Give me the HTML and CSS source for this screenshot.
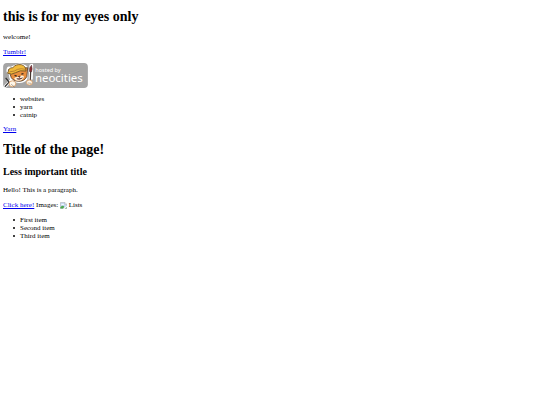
FILE: index.html
```html
<!DOCTYPE html>
<html lang="en">
<head>
<meta charset="utf-8">
<title>this is for my eyes only</title>
<link rel="stylesheet" href="styles.css">
</head>
<body>
<h1>this is for my eyes only</h1>
<p>welcome!</p>
<p><a href="#tumblr">Tumblr!</a></p>
<a class="host" href="#neocities" aria-label="hosted by neocities">
<svg class="badge" viewBox="0 0 200 59">
  <rect width="200" height="59" rx="9" fill="#a5a5a5"/>
  <!-- white outline around the cat -->
  <path d="M9 12 Q10 6 18 9 L27 5 Q38 -2 50 4 Q62 8 59 23 L57 39 Q50 48 36 47 L25 45 Q13 40 14 28 Q5 25 9 12Z" fill="#fff"/>
  <path d="M63 43 L65 6 L68 5 L67 39" fill="none" stroke="#fff" stroke-width="6" stroke-linejoin="round"/>
  <path d="M5 55 L22 38" stroke="#fff" stroke-width="7" stroke-linecap="round"/>
  <!-- head and ears -->
  <path d="M17 28 L13 16 L25 18 L50 12 L58 11 L56 32 Q50 44 36 43 Q20 43 17 28Z" fill="#e98f3e" stroke="#503a29" stroke-width="2"/>
  <path d="M26 36 Q30 32 37 33 Q43 27 49 31 Q48 41 37 42 Q28 42 26 36Z" fill="#fff3df"/>
  <!-- cap -->
  <path d="M12 21 Q12 11 23 11 Q30 2 43 4 Q54 7 54 19 Q40 16 29 23 Q20 29 10 24Z" fill="#f0b93a" stroke="#6b4d22" stroke-width="2"/>
  <path d="M15 21 Q28 20 34 15 Q43 12 52 15" fill="none" stroke="#ad7930" stroke-width="2"/>
  <path d="M27 29 L32 31 M43 26 L48 25" stroke="#342923" stroke-width="3"/>
  <path d="M36 32 L40 31 L39 34Z M32 37 Q38 41 46 35" fill="#7e3939" stroke="#573a32" stroke-width="2"/>
  <!-- pen, brush and paws -->
  <path d="M4 56 L14 45 M6 35 L18 50" stroke="#333" stroke-width="3"/>
  <path d="M64 43 L65 19" stroke="#463832" stroke-width="3"/>
  <path d="M62 20 Q61 11 67 5 Q70 14 67 21Z" fill="#8d3035" stroke="#41282a" stroke-width="1"/>
  <ellipse cx="22" cy="49" rx="8" ry="7" fill="#fff7e9" stroke="#d99b63" stroke-width="2"/>
  <ellipse cx="62" cy="46" rx="7" ry="6" fill="#fff7e9" stroke="#d99b63" stroke-width="2"/>
  <path d="M19 50 L27 57 M58 47 L66 48" stroke="#4b4038" stroke-width="1"/>
  <text class="hosted" x="76" y="22">hosted by</text>
  <text class="brand" x="75" y="45">neocities</text>
</svg>
</a>
<ul>
<li>websites</li>
<li>yarn</li>
<li>catnip</li>
</ul>
<p><a href="#yarn">Yarn</a></p>
<h1>Title of the page!</h1>
<h2>Less important title</h2>
<p>Hello! This is a paragraph.</p>
<p><a href="#click">Click here!</a> Images:
<svg class="missing" viewBox="0 0 16 16" role="img" aria-label="Missing image">
  <path d="M1 1 H11 L15 5 V15 H1Z" fill="#c7daf5" stroke="#9b9b9b"/>
  <path d="M11 1 V5 H15" fill="#fff" stroke="#9b9b9b"/>
  <path d="M3 7 Q3 4 6 5 Q9 4 9 7Z" fill="#fff"/>
  <path d="M1 15 V12 Q6 6 10 11 L7 15Z" fill="#4da850"/>
  <path d="M7 16 L16 8 V10 L10 16Z" fill="#fff"/>
  <path d="M12 15 L15 12 V15Z" fill="#4da850"/>
</svg>
Lists</p>
<ul>
<li>First item</li>
<li>Second item</li>
<li>Third item</li>
</ul>
</body>
</html>
```
FILE: styles.css
```css
body {
  margin: 0 3px;
  background: #fff;
  color: #000;
  font: 7px/8px "Liberation Serif", "Times New Roman", serif;
}
h1 {
  margin: 9px 0;
  font-size: 14px;
  line-height: 15px;
}
h2 {
  margin: 8px 0;
  font-size: 10px;
  line-height: 12px;
}
p {
  margin: 6px 0 7px;
}
ul {
  margin: 7px 0 6px;
  padding-left: 10px;
  list-style: none;
}
li {
  display: flex;
  align-items: center;
  gap: 5px;
}
li::before {
  content: "";
  width: 2px;
  height: 2px;
  border-radius: 1px;
  background: #000;
}
a {
  color: #0000ee;
}
.host {
  display: block;
  width: 85px;
}
.badge {
  display: block;
  width: 85px;
  height: 25px;
}
.hosted,
.brand {
  fill: #fff;
  font-family: "Noto Sans", sans-serif;
}
.hosted {
  font-size: 13px;
}
.brand {
  font-size: 27px;
}
.missing {
  width: 7px;
  height: 7px;
  vertical-align: bottom;
}
```
